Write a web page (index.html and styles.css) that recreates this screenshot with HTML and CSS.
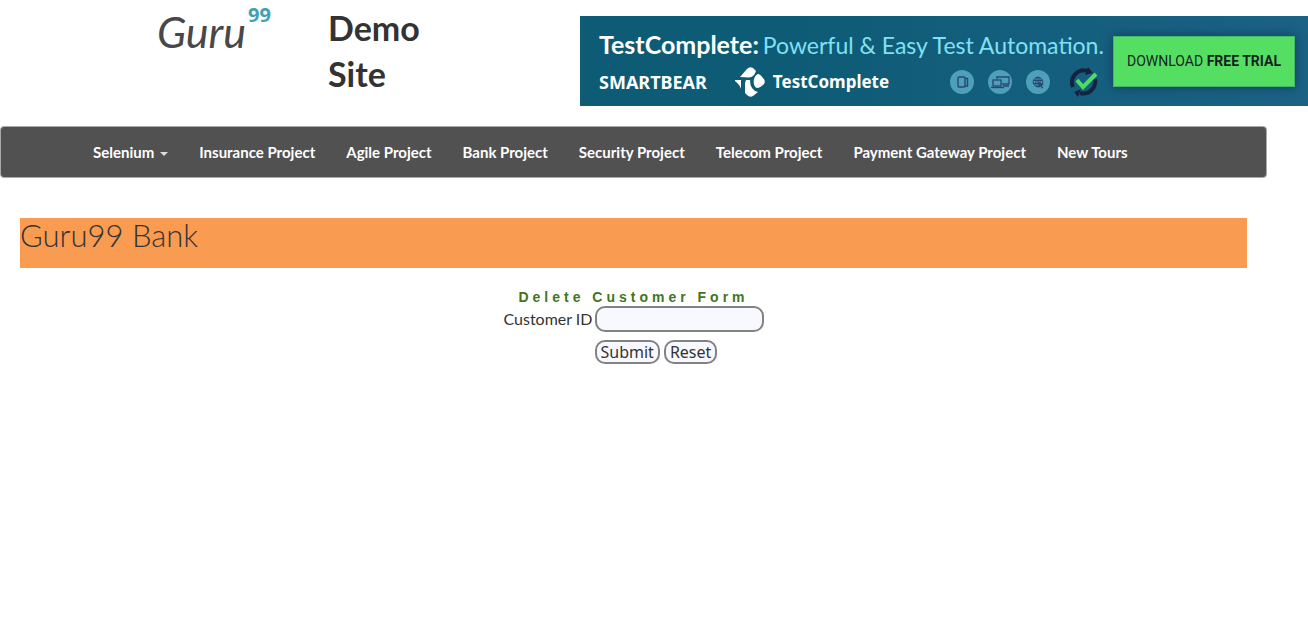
FILE: index.html
```html
<!DOCTYPE html>
<html lang="en">
<head>
<meta charset="utf-8">
<meta name="viewport" content="width=device-width, initial-scale=1">
<title>Guru99 Bank Delete Customer</title>
<link rel="stylesheet" href="styles.css">
</head>
<body>
<header class="header">
  <a class="logo" href="#"><span class="logo-word">Guru</span><sup class="logo-num">99</sup></a>
  <h1 class="site-title">Demo Site</h1>
  <a class="banner" href="#">
    <span class="banner-info">
      <span class="banner-head"><strong class="banner-name">TestComplete:</strong><span class="banner-tag">Powerful &amp; Easy Test Automation.</span></span>
      <span class="banner-brands">
        <strong class="brand">SMARTBEAR</strong>
        <svg class="tc-mark" width="30" height="30" viewBox="0 0 30 30" aria-hidden="true">
          <g fill="#fff">
            <path d="M5 10 12 2Q15-1 18 1L21 4Q19 10 14 10.500Z"/>
            <path d="M0 13H6V22Q5 18 0 14Z"/>
            <path d="M11 13H15Q15 23 23 25L18 29Q15 31 12 28L10 26V16Z"/>
            <path d="M23 7C18 9 17 19 22 21Q25 21 29 17Q31 14 28 11Q25 7 23 7Z"/>
          </g>
        </svg>
        <strong class="brand brand-product">TestComplete</strong>
        <span class="banner-icons">
          <svg width="24" height="24" viewBox="0 0 24 24" aria-hidden="true">
            <circle cx="12" cy="12" r="12" fill="#4d9fba"/>
            <g fill="none" stroke="#27486f" stroke-width="1.4"><rect x="8" y="7" width="7" height="10" rx="1"/><path d="M15 8.500h2.500v7.500H15"/></g>
          </svg>
          <svg width="24" height="24" viewBox="0 0 24 24" aria-hidden="true">
            <circle cx="12" cy="12" r="12" fill="#4d9fba"/>
            <g fill="none" stroke="#27486f" stroke-width="1.3"><path d="M9 9V7h12v7h-7M15 16h6"/><rect x="5" y="10" width="8" height="6"/><path d="M3 17.500h13"/></g>
          </svg>
          <svg width="24" height="24" viewBox="0 0 24 24" aria-hidden="true">
            <circle cx="12" cy="12" r="12" fill="#4d9fba"/>
            <g fill="none" stroke="#27486f"><circle cx="12" cy="12" r="4.800"/><ellipse cx="12" cy="12" rx="2.200" ry="4.800"/><path d="M7 10.500h10M7 13.500h7M12 7v9"/></g>
            <path d="M12 11.500l6 3-2.300.8 1.500 2.500-1.200.7-1.500-2.500-1.500 1.500Z" fill="#27486f"/>
          </svg>
          <svg class="check" width="30" height="30" viewBox="0 0 30 30" aria-hidden="true">
            <g fill="none" stroke="#16233f" stroke-width="4"><path d="M4 20A12 12 0 0 1 19 4M26 12A12 12 0 0 1 11 26"/></g>
            <path d="M19 0 24 6 16 8ZM12 22 5 25 9 30Z" fill="#16233f"/>
            <path d="M8 13l6 7L27 7" fill="none" stroke="#50dc5f" stroke-width="4"/>
          </svg>
        </span>
      </span>
    </span>
    <span class="cta">DOWNLOAD <strong>FREE TRIAL</strong></span>
  </a>
</header>
<main class="page">
  <nav class="nav">
    <ul class="nav-list">
      <li><a href="#">Selenium<span class="caret"></span></a></li>
      <li><a href="#">Insurance Project</a></li>
      <li><a href="#">Agile Project</a></li>
      <li><a href="#">Bank Project</a></li>
      <li><a href="#">Security Project</a></li>
      <li><a href="#">Telecom Project</a></li>
      <li><a href="#">Payment Gateway Project</a></li>
      <li><a href="#">New Tours</a></li>
    </ul>
  </nav>
  <h2 class="bank">Guru99 Bank</h2>
  <form class="form">
    <p class="form-title">Delete Customer Form</p>
    <label class="label" for="customer-id">Customer ID</label>
    <input class="field" id="customer-id" name="customer-id" type="text">
    <div class="actions">
      <button class="button" type="submit">Submit</button>
      <button class="button" type="reset">Reset</button>
    </div>
  </form>
</main>
</body>
</html>
```
FILE: styles.css
```css
* { box-sizing: border-box; }
body {
  margin: 0;
  background: #fff;
  color: #333;
  font-family: Lato, "Liberation Sans", sans-serif;
  font-size: 16px;
}
a { color: inherit; text-decoration: none; }

.header {
  display: flex;
  align-items: flex-start;
  min-height: 126px;
  padding-left: 157px;
}
.logo {
  display: flex;
  align-items: flex-start;
  flex: 0 0 171px;
  color: #484848;
}
.logo-word { font-size: 43px; font-style: italic; line-height: 64px; }
.logo-num {
  margin-left: 2px;
  color: #42a0b6;
  font-family: "Open Sans", sans-serif;
  font-size: 20px;
  font-weight: 700;
  line-height: 30px;
}
.site-title {
  flex: 0 0 132px;
  margin: 5px 120px 0 0;
  padding-right: 32px;
  font-size: 34px;
  font-weight: 700;
  line-height: 46px;
}
.banner {
  display: flex;
  flex: 1;
  justify-content: space-between;
  align-items: flex-start;
  height: 90px;
  margin-top: 16px;
  padding: 12px 13px 0 19px;
  background: linear-gradient(90deg, #0d5b75 25%, #1b6285);
  color: #fff;
  white-space: nowrap;
}
.banner-info { display: flex; flex-direction: column; gap: 4px; }
.banner-head { display: flex; align-items: baseline; gap: 4px; line-height: 32px; }
.banner-name { font-size: 25px; }
.banner-tag { color: #80e0f5; font-size: 23px; }
.banner-brands { display: flex; align-items: center; height: 34px; }
.brand { font-family: "Noto Sans", sans-serif; font-size: 18px; line-height: 30px; }
.brand-product { font-size: 17px; }
.tc-mark { margin: 0 8px 0 28px; }
.banner-icons { display: flex; align-items: center; gap: 14px; margin-left: auto; padding-right: 5px; }
.check { margin-left: 5px; }
.cta {
  margin-top: 8px;
  padding: 0 13px;
  border: 1px solid #43b76a;
  background: #54df63;
  box-shadow: 0 0 10px #123e57;
  color: #171f20;
  font-family: Roboto, sans-serif;
  font-size: 14px;
  line-height: 49px;
}

.page { margin-right: 41px; }
.nav {
  border: 1px solid #aaa;
  border-radius: 4px;
  background: #515151;
  color: #fff;
  font-size: 15px;
  font-weight: 700;
}
.nav-list {
  display: flex;
  gap: 1px;
  margin: 0;
  padding: 0 77px;
  list-style: none;
}
.nav-list a { display: block; padding: 0 15px; line-height: 50px; white-space: nowrap; }
.caret {
  display: inline-block;
  margin-left: 6px;
  border: 4px solid transparent;
  border-top-color: #ddd;
  border-bottom: 0;
  vertical-align: middle;
}

.bank {
  height: 50px;
  margin: 40px 20px 20px;
  background: #f99b50;
  font-size: 31px;
  font-weight: 300;
  line-height: 34px;
}
.form {
  display: grid;
  grid-template-columns: 91px 169px;
  justify-content: center;
}
.form-title {
  grid-column: 1 / -1;
  margin: 0;
  color: #41761b;
  font-family: "Liberation Sans", Arial, sans-serif;
  font-size: 14px;
  font-weight: 700;
  letter-spacing: 4px;
  line-height: 18px;
  text-align: center;
}
.label { line-height: 26px; }
.field, .button {
  border: 2px solid #828282;
  border-radius: 10px;
  background: #f8f8ff;
  color: #333;
  font-family: "Noto Sans", sans-serif;
  font-size: 16px;
}
.field { width: 100%; height: 26px; padding: 0 6px; }
.actions { display: flex; grid-column: 2; gap: 4px; margin-top: 8px; }
.button { height: 24px; padding: 0 4px; line-height: 20px; }
```
